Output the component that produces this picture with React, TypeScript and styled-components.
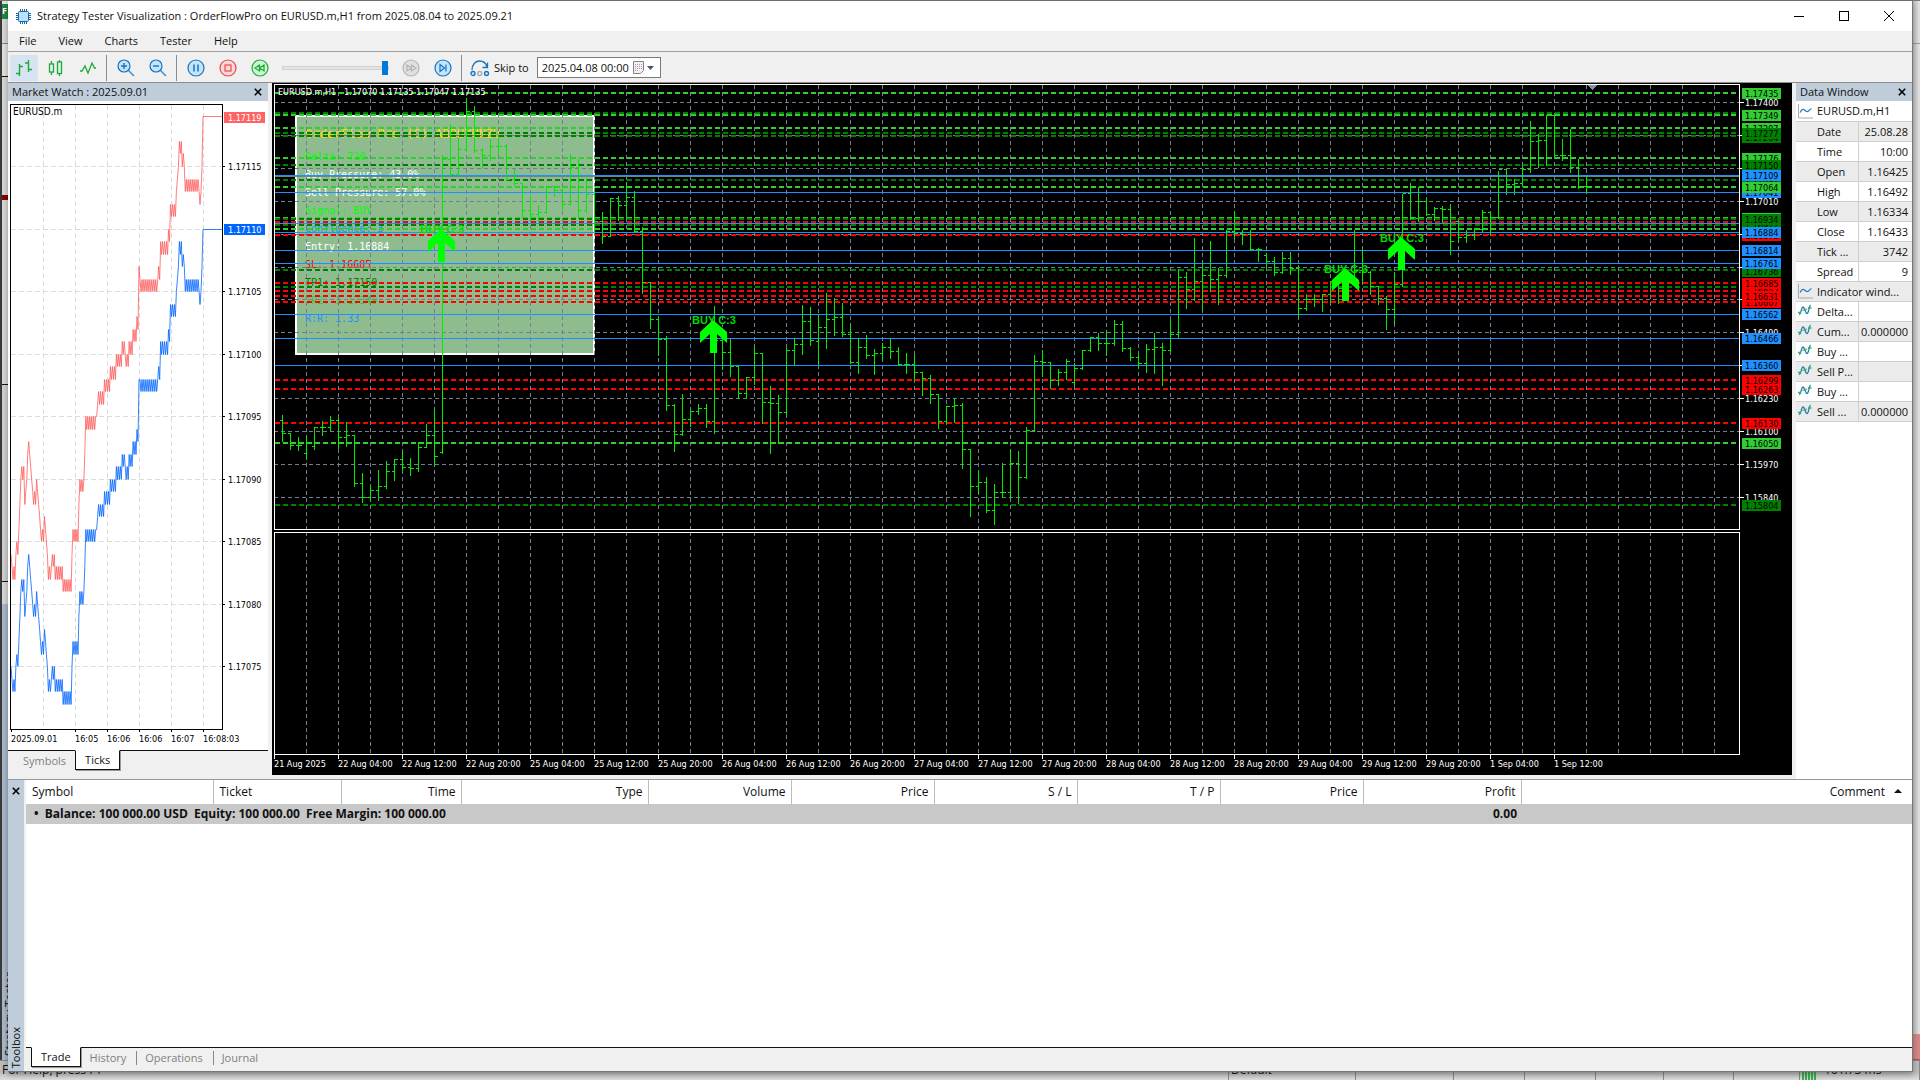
import React from 'react';
import styled, { createGlobalStyle, css } from 'styled-components';

const ui = `'Open Sans', 'Noto Sans', sans-serif`;
const small = `'DejaVu Sans Condensed', 'DejaVu Sans', sans-serif`;
const mono = `'DejaVu Sans Mono', 'Liberation Mono', monospace`;

const GlobalStyle = createGlobalStyle`
  *, *::before, *::after { box-sizing: border-box; }
  body { margin: 0; background: #dcdcdc; overflow: hidden; }
  button, input { font: inherit; color: inherit; }
  button { border: 0; background: none; padding: 0; }
`;

/* ---------- layers ---------- */

const Desktop = styled.div`
  display: grid;
  grid-template-columns: minmax(0, 1fr);
  grid-template-rows: minmax(0, 1fr);
  height: 100vh;
  min-height: 900px;
  font: 11px/16px ${ui};
  color: #111;
`;
const BackLayer = styled.div`
  grid-area: 1 / 1;
  display: flex;
  flex-direction: column;
  background: #e2e2e2;
  border-top: 1px solid #777;
  overflow: hidden;
`;
const BackBody = styled.div`
  flex: 1;
  display: flex;
  justify-content: space-between;
  min-height: 0;
`;
const BackLeft = styled.div`
  width: 8px;
  border-left: 2px solid #3a3a3a;
  display: flex;
  flex-direction: column;
  background: #dcdcdc;
`;
const BackBlock = styled.div<{ $h: number; $bg: string; $line?: string }>`
  flex: none;
  height: ${p => p.$h}px;
  background: ${p => p.$bg};
  border-bottom: 1px solid ${p => p.$line || p.$bg};
  color: #fff;
  font: bold 9px/14px ${ui};
  overflow: hidden;
`;
const BackSide = styled.div`
  flex: 1;
  min-height: 0;
  background: #a9b8cb;
  display: flex;
  align-items: flex-end;
  padding-bottom: 4px;
`;
const BackSideText = styled.span`
  writing-mode: vertical-rl;
  transform: rotate(180deg);
  font: 12px/16px ${ui};
  white-space: nowrap;
`;
const BackRight = styled.div`
  width: 8px;
  background: linear-gradient(to right, #bdbdbd, #e4e4e4);
  display: flex;
  flex-direction: column;
  justify-content: space-between;
`;
const BackStatus = styled.div`
  flex: none;
  height: 20px;
  display: flex;
  background: linear-gradient(to bottom, #bcbcbc 11px, #dedede);
  border-top: 1px solid #888;
  font: 12px/18px ${ui};
`;
const StatusCell = styled.div<{ $w?: number }>`
  ${p => (p.$w ? `flex: none; width: ${p.$w}px;` : 'flex: 1;')}
  border-right: 1px solid #888;
  padding: 0 4px 0 2px;
  display: flex;
  gap: 8px;
  white-space: nowrap;
`;
const SignalBars = styled.i`
  width: 14px;
  background: repeating-linear-gradient(to right, #35b34a 0 2px, transparent 2px 3px);
`;

const Window = styled.main`
  grid-area: 1 / 1;
  z-index: 1;
  margin: 1px 7px 8px 8px;
  display: flex;
  flex-direction: column;
  min-height: 0;
  background: #f0f0f0;
  border-right: 1px solid #777;
  border-bottom: 1px solid #777;
  box-shadow: 0 2px 6px rgba(0, 0, 0, 0.35);
`;

/* ---------- title, menu, toolbar ---------- */

const TitleBar = styled.header`
  flex: none;
  height: 30px;
  display: flex;
  align-items: center;
  padding: 0 1px 0 8px;
  gap: 6px;
  background: #fff;
`;
const Title = styled.h1`
  flex: 1;
  margin: 0;
  font: 11px/16px ${ui};
`;
const ButtonStrip = styled.div`
  display: flex;
`;
const WinButton = styled.button`
  width: 45px;
  height: 30px;
  display: grid;
  place-items: center;
`;
const MenuBar = styled.nav`
  flex: none;
  height: 21px;
  display: flex;
  border-bottom: 1px solid #a0a0a0;
`;
const MenuItem = styled.button`
  padding: 0 11px;
  line-height: 18px;
`;
const Toolbar = styled.div`
  flex: none;
  height: 31px;
  display: flex;
  align-items: center;
  gap: 4px;
  padding: 1px 2px 0;
  border-bottom: 1px solid #8c8c8c;
`;
const ToolButton = styled.button<{ $on?: boolean }>`
  width: 28px;
  height: 26px;
  display: grid;
  place-items: center;
  background: ${p => (p.$on ? '#d6e4f2' : 'transparent')};
`;
const ToolSep = styled.span`
  width: 1px;
  height: 26px;
  margin: 0 1px 0 0;
  background: #8c8c8c;
`;
const Speed = styled.input`
  appearance: none;
  width: 107px;
  height: 16px;
  margin: 0 4px;
  background: transparent;
  &::-webkit-slider-runnable-track {
    height: 4px;
    background: #e3e3e3;
    border: 1px solid #d2d2d2;
  }
  &::-webkit-slider-thumb {
    appearance: none;
    width: 6px;
    height: 14px;
    margin-top: -6px;
    background: #0078d7;
  }
`;
const SkipLabel = styled.label`
  display: flex;
  align-items: center;
  gap: 4px;
  margin: 0 4px 0 3px;
  white-space: nowrap;
`;
const DateBox = styled.div`
  width: 124px;
  height: 21px;
  display: flex;
  align-items: center;
  background: #fff;
  border: 1px solid #7a7a7a;
`;
const DateInput = styled.input`
  flex: 1;
  min-width: 0;
  border: 0;
  padding: 0 0 0 4px;
  background: transparent;
  outline: none;
`;
const DateDrop = styled.button`
  display: flex;
  align-items: center;
  padding-right: 5px;
`;

/* ---------- main area ---------- */

const Main = styled.section`
  flex: 1;
  min-height: 0;
  display: flex;
  gap: 4px;
`;
const Panel = styled.aside<{ $w: number }>`
  flex: none;
  width: ${p => p.$w}px;
  display: flex;
  flex-direction: column;
  background: #fff;
`;
const PanelHead = styled.header`
  flex: none;
  height: 18px;
  display: flex;
  align-items: center;
  justify-content: space-between;
  padding: 0 5px 0 4px;
  background: #bfccda;
`;
const PanelTitle = styled.h2`
  margin: 0;
  font: 11px/18px ${ui};
`;
const CloseButton = styled.button`
  display: grid;
  place-items: center;
  width: 10px;
  height: 16px;
`;
const TickSvg = styled.svg`
  flex: 1;
  min-height: 0;
  width: 100%;
  display: block;
  font: 9px ${small};
`;
const TabRow = styled.div<{ $pad: number }>`
  flex: none;
  height: 24px;
  display: flex;
  align-items: flex-start;
  padding-left: ${p => p.$pad}px;
  background: #f0f0f0;
  border-top: 1px solid #111;
`;
const Tab = styled.button<{ $on?: boolean; $sep?: boolean }>`
  height: 20px;
  padding: 0 9px;
  line-height: 18px;
  color: #808080;
  ${p => p.$sep && css`
    &::after {
      content: '';
      display: inline-block;
      width: 1px;
      height: 14px;
      margin: 0 -10px -3px 10px;
      background: #888;
    }
  `}
  ${p => p.$on && css`
    margin-top: -1px;
    background: #fff;
    color: #111;
    border: 1px solid #111;
    border-top-color: #fff;
    box-shadow: 1px 1px 0 #999;
  `}
`;
const BottomGap = styled.div`
  flex: none;
  height: 5px;
  background: #f0f0f0;
`;

const ChartArea = styled.section`
  flex: 1;
  min-width: 0;
  display: grid;
  grid-template-columns: minmax(0, 1fr) 53px;
  grid-template-rows: 448px minmax(0, 1fr) 20px;
  padding: 1px 0 0 2px;
  margin-bottom: 4px;
  background: #000;
  color: #fff;
  font: 9px ${small};
`;
const Plot = styled.svg`
  width: 100%;
  height: 100%;
  display: block;
`;
const SubPlotBox = styled.div`
  grid-column: 1;
  min-height: 0;
`;
const DateAxis = styled.ol`
  grid-column: 1 / -1;
  margin: 0;
  padding: 0;
  list-style: none;
  display: flex;
  overflow: hidden;
`;
const DateTick = styled.li`
  flex: none;
  width: 64px;
  height: 20px;
  line-height: 10px;
  white-space: nowrap;
  &::before {
    content: '';
    display: block;
    width: 1px;
    height: 4px;
    background: #fff;
  }
`;

const DataTable = styled.table`
  width: 100%;
  border-collapse: collapse;
  table-layout: fixed;
  td, th {
    height: 20px;
    padding: 0;
    font: 11px/19px ${ui};
    border-bottom: 1px solid #cfcfcf;
    white-space: nowrap;
    overflow: hidden;
    text-align: left;
  }
  td {
    padding-right: 4px;
    text-align: right;
    border-left: 1px solid #cfcfcf;
  }
  tr:nth-child(even) { background: #ebebeb; }
`;
const RowHead = styled.span`
  display: flex;
  align-items: center;
  gap: 4px;
  padding-left: 2px;
`;
const IconSlot = styled.span`
  flex: none;
  width: 15px;
  height: 16px;
`;

/* ---------- toolbox ---------- */

const Toolbox = styled.section`
  flex: none;
  height: 292px;
  display: flex;
  gap: 2px;
  border-top: 1px solid #999;
`;
const ToolboxRail = styled.div`
  width: 16px;
  display: flex;
  flex-direction: column;
  justify-content: space-between;
  align-items: center;
  padding: 3px 0;
  background: #bfccda;
`;
const RailText = styled.h2`
  margin: 0;
  writing-mode: vertical-rl;
  transform: rotate(180deg);
  font: 11px/14px ${ui};
`;
const ToolboxBody = styled.div`
  flex: 1;
  min-width: 0;
  display: flex;
  flex-direction: column;
  background: #fff;
`;
const TableWrap = styled.div`
  flex: 1;
  min-height: 0;
`;
const TradeTable = styled.table`
  width: 100%;
  table-layout: fixed;
  border-collapse: collapse;
  th {
    height: 24px;
    padding: 0 5px 0 6px;
    font: 12px/20px ${ui};
    border-right: 1px solid #bbb;
    text-align: right;
  }
  th:nth-child(-n + 2) { text-align: left; }
  th:last-child { border-right: 0; padding-right: 10px; }
  td {
    height: 20px;
    padding: 0 4px 0 8px;
    background: #c8c8c8;
    font: bold 12px/18px ${ui};
    white-space: pre;
  }
  td:nth-child(2) { text-align: right; }
`;
const SortMark = styled.span`
  display: inline-block;
  margin-left: 9px;
  border: 4px solid transparent;
  border-top: 0;
  border-bottom-color: #111;
  vertical-align: 3px;
`;

/* ---------- data ---------- */

const LIME = '#32cd32';
const GREEN = '#008000';
const RED = '#ff0000';
const BLUE = '#1e90ff';
const SLATE = '#708090';

const gridY = [18, 51, 84, 117, 150, 183, 215, 248, 281, 314, 347, 380, 413];
const gridX = Array.from({ length: 80 }, (_, i) => 32 + i * 32);

// vertical position inside the price pane, colour
const levels: [number, string][] = [
  [29, GREEN], [9, LIME], [31, LIME], [44, LIME], [49, GREEN], [52, GREEN], [74, LIME], [81, GREEN],
  [96, GREEN], [103, LIME], [134, LIME], [135, GREEN], [138, RED], [141, GREEN], [145, LIME], [151, RED],
  [186, GREEN], [199, RED], [203, GREEN], [207, RED], [212, RED], [218, RED],
  [296, RED], [305, RED], [339, RED], [359, LIME], [421, GREEN],
];
const entries = [91, 108, 139, 148, 166, 179, 230, 254, 281];

const plainPrices: [number, string][] = [
  [18, '1.17400'], [117, '1.17010'], [248, '1.16490'], [314, '1.16230'],
  [347, '1.16100'], [380, '1.15970'], [413, '1.15840'],
];
const tagPrices: [number, string, string][] = [
  [9, '1.17435', LIME], [31, '1.17349', LIME], [44, '1.17297', LIME], [53, '1.17264', GREEN],
  [49, '1.17277', GREEN], [74, '1.17176', LIME], [96, '1.17092', GREEN], [81, '1.17150', GREEN],
  [91, '1.17109', BLUE], [108, '1.17041', BLUE], [103, '1.17064', LIME],
  [134, '1.16940', LIME], [141, '1.16912', GREEN], [135, '1.16934', GREEN],
  [151, '1.16872', RED], [148, '1.16884', BLUE], [166, '1.16814', BLUE],
  [187, '1.16736', GREEN], [179, '1.16761', BLUE],
  [218, '1.16607', RED], [206, '1.16652', RED], [212, '1.16631', RED], [199, '1.16685', RED],
  [230, '1.16562', BLUE], [254, '1.16466', BLUE], [281, '1.16360', BLUE],
  [296, '1.16299', RED], [305, '1.16263', RED], [339, '1.16130', RED],
  [359, '1.16050', LIME], [421, '1.15804', GREEN],
];

// high, low, close (and open, where it gaps) of each hourly bar, in screen rows
const bars: [number, number, number, number?][] = [
  [414, 441, 433], [432, 449, 445], [436, 450, 445], [435, 458, 442, 453], [426, 449, 427, 446],
  [420, 435, 427], [415, 431, 420], [417, 448, 437], [421, 446, 435], [435, 486, 483],
  [472, 502, 497], [485, 501, 490], [469, 500, 486], [460, 488, 471], [458, 480, 459],
  [451, 470, 467], [457, 475, 468], [441, 471, 447], [423, 447, 435], [408, 465, 456],
  [154, 453, 159, 452], [123, 175, 174], [137, 175, 149], [97, 151, 111], [105, 152, 150],
  [147, 168, 155], [138, 160, 146], [135, 154, 146], [143, 180, 179], [168, 185, 183],
  [183, 217, 210], [195, 219, 214], [204, 221, 212], [185, 213, 186], [185, 196, 190],
  [187, 209, 204], [153, 204, 167], [158, 218, 210], [177, 212, 194], [187, 232, 221],
  [211, 243, 236], [197, 236, 198], [195, 220, 205], [181, 218, 197], [190, 232, 231],
  [226, 293, 282], [282, 328, 319], [316, 355, 339], [335, 410, 405], [403, 451, 434],
  [393, 435, 419], [410, 426, 411], [403, 414, 408], [403, 427, 421], [305, 433, 340],
  [330, 369, 352], [338, 376, 366], [366, 398, 393], [376, 398, 377], [345, 384, 353],
  [353, 423, 402], [385, 453, 403], [394, 443, 412], [347, 414, 350], [337, 364, 344],
  [304, 354, 321], [306, 345, 340], [313, 364, 327, 341], [292, 348, 319], [297, 335, 317],
  [302, 336, 334], [324, 363, 362], [337, 373, 347], [334, 358, 355], [348, 374, 353],
  [342, 359, 347], [338, 358, 351], [346, 365, 364], [352, 373, 364], [354, 380, 372],
  [371, 395, 378], [374, 403, 394], [393, 428, 421], [405, 423, 406], [397, 422, 405],
  [402, 468, 449], [448, 516, 486], [469, 493, 482], [476, 512, 510], [483, 524, 492],
  [462, 497, 492], [448, 498, 463], [450, 503, 477], [426, 478, 430], [354, 431, 361],
  [349, 376, 362], [361, 388, 380], [368, 385, 372], [358, 379, 361], [362, 385, 368, 382],
  [349, 369, 350], [336, 351, 337], [332, 350, 343], [330, 355, 343], [319, 345, 324],
  [320, 351, 348], [346, 360, 357], [354, 368, 363], [343, 372, 349], [332, 373, 347],
  [342, 385, 350], [318, 351, 334], [268, 337, 277], [271, 308, 289], [237, 300, 281],
  [262, 310, 275], [240, 291, 279], [267, 304, 275], [229, 277, 231], [210, 238, 233],
  [229, 244, 234], [229, 250, 249], [247, 261, 249], [252, 267, 261, 255], [256, 275, 272],
  [251, 273, 258], [251, 274, 268], [264, 316, 308], [293, 310, 299], [293, 306, 299],
  [293, 311, 294], [280, 302, 281], [280, 303, 288], [273, 300, 282], [229, 285, 270],
  [248, 283, 272], [270, 294, 286], [285, 304, 298], [295, 329, 309], [271, 323, 284],
  [193, 286, 193], [182, 219, 218], [186, 221, 201], [197, 215, 214], [206, 220, 208],
  [205, 222, 209], [203, 254, 241], [220, 242, 237, 221], [229, 242, 235], [227, 239, 229],
  [209, 231, 212], [211, 234, 217], [170, 218, 169], [168, 194, 184], [178, 194, 183],
  [165, 185, 169], [120, 172, 141], [133, 167, 140], [114, 165, 115], [114, 157, 155],
  [138, 160, 155], [128, 172, 167], [158, 188, 186], [175, 193, 187],
];
const barPath = bars
  .map(([hi, lo, close, open], i) => {
    const x = 8 + i * 8;
    const o = open ?? (i ? bars[i - 1][2] : 420);
    return `M${x} ${hi - 84}V${lo - 84}M${x - 3} ${o - 84}h3M${x} ${close - 84}h3`;
  })
  .join('');

const signals = [
  { x: 167, label: 149, tip: 145 },
  { x: 439, label: 240, tip: 236 },
  { x: 1071, label: 189, tip: 184 },
  { x: 1127, label: 158, tip: 153 },
];

const infoLines: [number, string, string][] = [
  [76, 'Delta: 720', '#00ff00'],
  [94, 'Buy Pressure: 43.0%', '#ffffff'],
  [112, 'Sell Pressure: 57.0%', '#ffffff'],
  [130, 'Signal: BUY', '#00ff00'],
  [148, 'Confluence: 3', BLUE],
  [166, 'Entry: 1.16884', '#ffffff'],
  [184, 'SL: 1.16685', RED],
  [202, 'TP1: 1.17150', GREEN],
  [220, 'TP2: 1.17349', LIME],
  [238, 'R:R: 1.33', BLUE],
];

const dates = [
  '21 Aug 2025', '22 Aug 04:00', '22 Aug 12:00', '22 Aug 20:00', '25 Aug 04:00', '25 Aug 12:00',
  '25 Aug 20:00', '26 Aug 04:00', '26 Aug 12:00', '26 Aug 20:00', '27 Aug 04:00', '27 Aug 12:00',
  '27 Aug 20:00', '28 Aug 04:00', '28 Aug 12:00', '28 Aug 20:00', '29 Aug 04:00', '29 Aug 12:00',
  '29 Aug 20:00', '1 Sep 04:00', '1 Sep 12:00',
];

// ask price in points above 1.17000, one entry per tick
const zig = (n: number, a: number, b: number) => Array.from({ length: n }, (_, i) => (i % 2 ? b : a));
const ask: number[] = [
  84, 83, 82, 83, 82, 84, 85, 84, 86, 88, 90, 91, 90, 91, 88, 89, 90, 92, 93, 92, 91, 90, 89, 88, 89, 88, 90, 89,
  88, 87, 86, 85, 86, 85, 87, 86, 85, 84, 82, 83, 82, 83, 84, 83, 84, ...zig(8, 82, 83), ...zig(9, 81, 82),
  84, ...zig(6, 86, 85), 88, ...zig(5, 90, 89), 92, ...zig(11, 95, 94), 95, 96, ...zig(6, 97, 96),
  ...zig(6, 98, 97), ...zig(6, 99, 98), ...zig(6, 100, 99), 101, 100, 101, 100, 99, 100, 99, 101, 100, 101, 100,
  102, 101, 102, 101, 103, 102, 107, ...zig(19, 106, 105), 107, 106, ...zig(8, 109, 108), 110, 109,
  ...zig(6, 112, 111), 113, 114, 115, 117, 116, 117, 115, 116, 115, ...zig(15, 113, 114), 112, 113, 115, 119,
];
const step = 192 / (ask.length - 1);
const tickY = (p: number) => Math.round(65 + (115 - p) * 12.51) + 0.5;
const tickPath = (shift: (i: number) => number) =>
  'M' + ask.map((p, i) => `${Math.round((3 + i * step) * 10) / 10} ${tickY(p - shift(i))}`).join('L') + 'H214';
const spike = ask.indexOf(107);
const askPath = tickPath(() => 0);
const bidPath = tickPath(i => (i <= spike || i === ask.length - 1 ? 9 : 8));
const tickLabels = [115, 105, 100, 95, 90, 85, 80, 75];

type DataRow = { label: string; value?: string; icon?: 'chart' | 'wave'; wide?: boolean };
const dataRows: DataRow[] = [
  { label: 'EURUSD.m,H1', icon: 'chart', wide: true },
  { label: 'Date', value: '25.08.28' },
  { label: 'Time', value: '10:00' },
  { label: 'Open', value: '1.16425' },
  { label: 'High', value: '1.16492' },
  { label: 'Low', value: '1.16334' },
  { label: 'Close', value: '1.16433' },
  { label: 'Tick ...', value: '3742' },
  { label: 'Spread', value: '9' },
  { label: 'Indicator wind...', icon: 'chart', wide: true },
  { label: 'Delta...', value: '', icon: 'wave' },
  { label: 'Cum...', value: '0.000000', icon: 'wave' },
  { label: 'Buy ...', value: '', icon: 'wave' },
  { label: 'Sell P...', value: '', icon: 'wave' },
  { label: 'Buy ...', value: '', icon: 'wave' },
  { label: 'Sell ...', value: '0.000000', icon: 'wave' },
];

const columns: [string, number?][] = [
  ['Symbol', 187], ['Ticket', 128], ['Time', 120], ['Type', 187], ['Volume', 143], ['Price', 143],
  ['S / L', 143], ['T / P', 143], ['Price', 143], ['Profit', 158], ['Comment'],
];

/* ---------- icons ---------- */

const ChipIcon = () => (
  <svg width="15" height="15" viewBox="0 0 15 15" fill="none" stroke="#1a66a8">
    <path d="M4.5 0v15M6.5 0v15M8.5 0v15M10.5 0v15M0 4.5h15M0 6.5h15M0 8.5h15M0 10.5h15" />
    <rect x="2.5" y="2.5" width="10" height="10" rx="1" fill="#b9e2ff" />
  </svg>
);
const CrossIcon = () => (
  <svg width="8" height="8" viewBox="0 0 8 8" stroke="#000" strokeWidth="1.6"><path d="M.8.8l6.4 6.4M7.2.8L.8 7.2" /></svg>
);
const Round = ({ tone, children }: { tone: 'blue' | 'red' | 'green' | 'gray'; children: React.ReactNode }) => {
  const c = { blue: ['#1a73b8', '#c3e4ff'], red: ['#e5484d', '#ffd9d6'], green: ['#1fa83a', '#cdf5cf'], gray: ['#b5b5b5', '#e0e0e0'] }[tone];
  return (
    <svg width="18" height="18" viewBox="0 0 18 18" fill="none" stroke={c[0]} strokeWidth="1.2">
      <circle cx="9" cy="9" r="8" fill={c[1]} />
      {children}
    </svg>
  );
};
const Lens = ({ plus }: { plus?: boolean }) => (
  <svg width="18" height="18" viewBox="0 0 18 18" fill="none" stroke="#1a73b8" strokeWidth="1.2">
    <path d="M11.5 11.5l5.5 5.5" stroke="#4a90c4" strokeWidth="1.6" />
    <circle cx="7" cy="7" r="6" fill="#c3e4ff" />
    <path d={plus ? 'M4 7h6M7 4v6' : 'M4 7h6'} strokeWidth="1.4" />
  </svg>
);
const ChartRowIcon = () => (
  <svg width="15" height="16" viewBox="0 0 15 16" fill="none">
    <path d="M.5 1v14H15" stroke="#aaa" />
    <path d="M2 9.5c2-3 3-4 4.5-2.5s2.5 2.5 4 1 2-2 3-2.5" stroke="#2b7ec0" strokeWidth="1.3" />
  </svg>
);
const WaveRowIcon = () => (
  <svg width="14" height="14" viewBox="0 0 14 14" fill="none" strokeWidth="1.3">
    <path d="M1 11.5c2.5 0 2-7.5 4-7.5s2 6.5 4 6.5 1.5-7 3.5-8.5" stroke="#2b7ec0" />
    <path d="M0 9.5h3M4.5 7.5L9 6M10 5h3.5" stroke="#35b34a" />
  </svg>
);

/* ---------- parts ---------- */

const WinButtons = () => (
  <ButtonStrip>
    <WinButton aria-label="Minimize"><svg width="10" height="10" stroke="#000"><path d="M0 5.5h10" /></svg></WinButton>
    <WinButton aria-label="Maximize"><svg width="10" height="10" stroke="#000" fill="none"><rect x=".5" y=".5" width="9" height="9" /></svg></WinButton>
    <WinButton aria-label="Close"><svg width="10" height="10" stroke="#000"><path d="M0 0l10 10M10 0L0 10" /></svg></WinButton>
  </ButtonStrip>
);

const TickChart = () => (
  <TickSvg shapeRendering="crispEdges" role="img" aria-label="EURUSD.m ticks">
    <g stroke="#dcdcdc" strokeDasharray="5 3">
      {[35, 67, 99, 131, 163, 195].map(x => <line key={x} x1={x + 0.5} x2={x + 0.5} y1="4" y2="628" />)}
      {[115, 110, 105, 100, 95, 90, 85, 80, 75].map(p => <line key={p} x1="3" x2="214" y1={tickY(p)} y2={tickY(p)} />)}
    </g>
    <path d={askPath} fill="none" stroke="#ff5c5c" strokeWidth=".8" shapeRendering="auto" />
    <path d={bidPath} fill="none" stroke="#0064ff" strokeWidth=".8" shapeRendering="auto" />
    <rect x="2.5" y="3.5" width="212" height="625" fill="none" stroke="#000" />
    <text x="5" y="14" fontSize="10">EURUSD.m</text>
    {tickLabels.map(p => (
      <g key={p}>
        <path d={`M215 ${tickY(p)}h2`} stroke="#000" />
        <text x="220" y={tickY(p) + 3}>{`1.17${String(p).padStart(3, '0')}`}</text>
      </g>
    ))}
    <rect x="216" y="11" width="41" height="11" fill="#ff6464" />
    <text x="220" y="20" fill="#fff">1.17119</text>
    <rect x="216" y="123" width="41" height="11" fill="#0064ff" />
    <text x="220" y="132" fill="#fff">1.17110</text>
    <path d="M3.5 629v2M67.5 629v2M99.5 629v2M131.5 629v2M163.5 629v2M195.5 629v2" stroke="#000" />
    <text x="3" y="641">2025.09.01</text>
    <text x="67" y="641">16:05</text>
    <text x="99" y="641">16:06</text>
    <text x="131" y="641">16:06</text>
    <text x="163" y="641">16:07</text>
    <text x="195" y="641">16:08:03</text>
  </TickSvg>
);

const PriceChart = () => (
  <Plot shapeRendering="crispEdges" role="img" aria-label="EURUSD.m,H1 price chart">
    <rect x="22" y="32" width="298" height="238" fill="#8fbc8f" stroke="#fff" strokeWidth="2" />
    <text x="31" y="54" fill="#ffd700" fontFamily={mono} fontSize="12">OrderFlow Pro (C) ABBUYUNZU</text>
    {infoLines.map(([y, text, fill]) => (
      <text key={y} x="31" y={y} fill={fill} fontFamily={mono} fontSize="10">{text}</text>
    ))}
    <g stroke={SLATE} strokeDasharray="4 3">
      {gridX.map(x => <line key={x} x1={x + 0.5} x2={x + 0.5} y1="1" y2="445" />)}
      {gridY.map(y => <line key={y} x1="0" x2="100%" y1={y + 0.5} y2={y + 0.5} />)}
    </g>
    {levels.map(([y, c], i) => (
      <line key={i} x1="1" x2="100%" y1={y} y2={y} stroke={c} strokeWidth="2" strokeDasharray="5 3" />
    ))}
    <line x1="0" x2="100%" y1="92.5" y2="92.5" stroke={SLATE} />
    {entries.map(y => <line key={y} x1="0" x2="100%" y1={y + 0.5} y2={y + 0.5} stroke={BLUE} />)}
    <path d={barPath} transform="translate(.5 .5)" stroke="#00ec00" fill="none" />
    {signals.map(s => (
      <g key={s.x}>
        <text x={s.x + 1} y={s.label} textAnchor="middle" fill="#00dc00" fontFamily="'Liberation Sans', Arial, sans-serif" fontWeight="bold" fontSize="11">BUY C:3</text>
        <path transform={`translate(${s.x} ${s.tip})`} d="M0 0L14 12V23L4 14V33H-3V14L-13 23V12Z" fill="#00ff00" shapeRendering="auto" />
      </g>
    ))}
    <path d="M1313 1h10l-5 5z" fill="#8090a8" />
    <text x="4" y="11" fill="#fff" xmlSpace="preserve">EURUSD.m,H1   1.17070 1.17135 1.17047 1.17135</text>
    <path d="M.5 0V446" stroke="#fff" />
    <line x1="0" x2="100%" y1=".5" y2=".5" stroke="#fff" />
    <line x1="0" x2="100%" y1="445.5" y2="445.5" stroke="#fff" />
  </Plot>
);

const PriceAxis = () => (
  <Plot shapeRendering="crispEdges">
    <path d="M.5 0V446" stroke="#fff" />
    {gridY.map(y => <path key={y} d={`M1 ${y + 0.5}h4`} stroke="#fff" />)}
    {plainPrices.map(([y, t]) => <text key={t} x="6" y={y + 4} fill="#fff">{t}</text>)}
    {tagPrices.map(([y, t, c]) => (
      <g key={t}>
        <rect x="3" y={y - 5} width="39" height="11" fill={c} />
        <text x="6" y={y + 4} fill="#000">{t}</text>
      </g>
    ))}
  </Plot>
);

const SubPlot = () => (
  <>
    <SubPlotBox>
      <Plot shapeRendering="crispEdges">
        <g stroke={SLATE} strokeDasharray="4 3">
          {gridX.map(x => <line key={x} x1={x + 0.5} x2={x + 0.5} y1="0" y2="100%" />)}
        </g>
        <rect x="0" y="0" width="200%" height="100%" fill="none" stroke="#fff" strokeWidth="2" />
      </Plot>
    </SubPlotBox>
    <Plot shapeRendering="crispEdges"><line x1=".5" x2=".5" y1="0" y2="100%" stroke="#fff" /></Plot>
  </>
);

export default function App() {
  return (
    <Desktop>
      <GlobalStyle />
      <BackLayer aria-hidden="true">
        <BackBody>
          <BackLeft>
            <BackBlock $h={3} $bg="#e2e2e2" />
            <BackBlock $h={15} $bg="#1d8a42">F</BackBlock>
            <BackBlock $h={25} $bg="#d8d8d8" $line="#888" />
            <BackBlock $h={33} $bg="#e2e2e2" $line="#111" />
            <BackBlock $h={118} $bg="#d8d8d8" />
            <BackBlock $h={5} $bg="#8b0000" />
            <BackBlock $h={185} $bg="#d8d8d8" $line="#111" />
            <BackBlock $h={197} $bg="#d0d0d0" $line="#111" />
            <BackBlock $h={22} $bg="#d8d8d8" />
            <BackSide><BackSideText>Strategy Tester</BackSideText></BackSide>
          </BackLeft>
          <BackRight>
            <BackBlock $h={43} $bg="transparent" $line="#999" />
            <BackBlock $h={26} $bg="#d68686" $line="#b05050" />
          </BackRight>
        </BackBody>
        <BackStatus>
          <StatusCell>For Help, press F1</StatusCell>
          <StatusCell $w={127}>Default</StatusCell>
          <StatusCell $w={98} />
          <StatusCell $w={71} />
          <StatusCell $w={71} />
          <StatusCell $w={68} />
          <StatusCell $w={70} />
          <StatusCell $w={66} />
          <StatusCell $w={120}><SignalBars />161.73 ms</StatusCell>
        </BackStatus>
      </BackLayer>

      <Window>
        <TitleBar>
          <ChipIcon />
          <Title>Strategy Tester Visualization : OrderFlowPro on EURUSD.m,H1 from 2025.08.04 to 2025.09.21</Title>
          <WinButtons />
        </TitleBar>
        <MenuBar>
          {['File', 'View', 'Charts', 'Tester', 'Help'].map(m => <MenuItem key={m}>{m}</MenuItem>)}
        </MenuBar>
        <Toolbar>
          <ToolButton $on aria-label="Bar chart">
            <svg width="18" height="18" viewBox="0 0 18 18" fill="none" stroke="#1fa83a" strokeWidth="1.4">
              <path d="M4.5 5v12M1 14.5h3.5M4.5 7.5H8M13.5 1v12M10 4h3.5M13.5 10.5H17" />
            </svg>
          </ToolButton>
          <ToolButton aria-label="Candlesticks">
            <svg width="16" height="18" viewBox="0 0 16 18" fill="none" stroke="#1fa83a" strokeWidth="1.3">
              <path d="M3.5 2v3M3.5 13v3M11.5 1v2M11.5 14.5V17" />
              <rect x="1.5" y="5" width="4" height="8" /><rect x="9.5" y="3" width="4" height="11.5" fill="#d8f8d8" />
            </svg>
          </ToolButton>
          <ToolButton aria-label="Line chart">
            <svg width="18" height="14" viewBox="0 0 18 14" fill="none" stroke="#1fa83a" strokeWidth="1.3">
              <path d="M1 10h2l3-5 3 7 4-10 2.5 5H17" />
            </svg>
          </ToolButton>
          <ToolSep />
          <ToolButton aria-label="Zoom in"><Lens plus /></ToolButton>
          <ToolButton aria-label="Zoom out"><Lens /></ToolButton>
          <ToolSep />
          <ToolButton aria-label="Pause"><Round tone="blue"><path d="M7 5.5v7M11 5.5v7" strokeWidth="1.5" /></Round></ToolButton>
          <ToolButton aria-label="Stop"><Round tone="red"><rect x="6" y="6" width="6" height="6" /></Round></ToolButton>
          <ToolButton aria-label="Slower"><Round tone="green"><path d="M8.5 6L4 9l4.5 3zM13 6L8.5 9l4.5 3z" /></Round></ToolButton>
          <Speed type="range" aria-label="Speed" min={0} max={100} defaultValue={100} />
          <ToolButton aria-label="Faster"><Round tone="gray"><path d="M9.5 6L14 9l-4.5 3zM5 6l4.5 3L5 12z" /></Round></ToolButton>
          <ToolButton aria-label="Next"><Round tone="blue"><path d="M6 5.5L10.5 9 6 12.5zM12 5.5v7" /></Round></ToolButton>
          <ToolSep />
          <SkipLabel htmlFor="skip-date">
            <svg width="20" height="18" viewBox="0 0 20 18" fill="none" stroke="#1a73b8" strokeWidth="1.3">
              <path d="M2 11C2 5 6 2 9.5 2S16 4 17 8M17.5 3.5V8.5H12.5" />
              <circle cx="3" cy="14.5" r="2" fill="#cbe8ff" /><circle cx="16.5" cy="14.5" r="2" fill="#cbe8ff" />
              <circle cx="9.7" cy="14.5" r="2" stroke="#aaa" />
            </svg>
            Skip to
          </SkipLabel>
          <DateBox>
            <DateInput id="skip-date" defaultValue="2025.04.08 00:00" />
            <DateDrop aria-label="Open calendar">
              <svg width="22" height="13" viewBox="0 0 22 13">
                <path d="M.5 .5h10v9l-3 3h-7z" fill="#f4f0f0" stroke="#8a8088" />
                <path d="M2 3.5h7M2 5.5h7M2 7.5h7M2 9.5h4" stroke="#a8a0a8" strokeDasharray="1 1" />
                <path d="M14 5h7l-3.5 4z" fill="#44557a" />
              </svg>
            </DateDrop>
          </DateBox>
        </Toolbar>

        <Main>
          <Panel $w={260}>
            <PanelHead>
              <PanelTitle>Market Watch : 2025.09.01</PanelTitle>
              <CloseButton aria-label="Close Market Watch"><CrossIcon /></CloseButton>
            </PanelHead>
            <TickChart />
            <TabRow $pad={6}>
              <Tab>Symbols</Tab>
              <Tab $on>Ticks</Tab>
            </TabRow>
            <BottomGap />
          </Panel>

          <ChartArea>
            <PriceChart />
            <PriceAxis />
            <SubPlot />
            <DateAxis>{dates.map(d => <DateTick key={d}>{d}</DateTick>)}</DateAxis>
          </ChartArea>

          <Panel $w={116}>
            <PanelHead>
              <PanelTitle>Data Window</PanelTitle>
              <CloseButton aria-label="Close Data Window"><CrossIcon /></CloseButton>
            </PanelHead>
            <DataTable>
              <colgroup><col /><col width="54" /></colgroup>
              <tbody>
                {dataRows.map((r, i) => (
                  <tr key={i}>
                    <th scope="row" colSpan={r.wide ? 2 : 1}>
                      <RowHead>
                        <IconSlot>{r.icon === 'chart' ? <ChartRowIcon /> : r.icon === 'wave' ? <WaveRowIcon /> : null}</IconSlot>
                        {r.label}
                      </RowHead>
                    </th>
                    {!r.wide && <td>{r.value}</td>}
                  </tr>
                ))}
              </tbody>
            </DataTable>
          </Panel>
        </Main>

        <Toolbox>
          <ToolboxRail>
            <CloseButton aria-label="Close Toolbox"><CrossIcon /></CloseButton>
            <RailText>Toolbox</RailText>
          </ToolboxRail>
          <ToolboxBody>
            <TableWrap>
              <TradeTable>
                <colgroup>{columns.map(([, w], i) => <col key={i} width={w} />)}</colgroup>
                <thead>
                  <tr>
                    {columns.map(([c], i) => <th key={i} scope="col">{c}{c === 'Comment' && <SortMark />}</th>)}
                  </tr>
                </thead>
                <tbody>
                  <tr>
                    <td colSpan={9}>{'•  Balance: 100 000.00 USD  Equity: 100 000.00  Free Margin: 100 000.00'}</td>
                    <td>0.00</td>
                    <td />
                  </tr>
                </tbody>
              </TradeTable>
            </TableWrap>
            <TabRow $pad={5}>
              <Tab $on>Trade</Tab>
              <Tab $sep>History</Tab>
              <Tab $sep>Operations</Tab>
              <Tab>Journal</Tab>
            </TabRow>
          </ToolboxBody>
        </Toolbox>
      </Window>
    </Desktop>
  );
}
